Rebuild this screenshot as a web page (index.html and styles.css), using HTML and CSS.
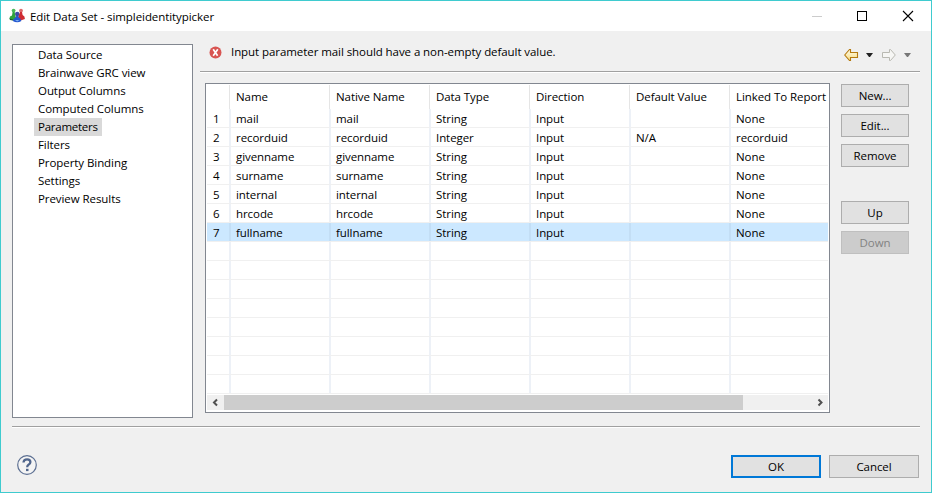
FILE: index.html
```html
<!DOCTYPE html>
<html lang="en">
<head>
<meta charset="utf-8">
<title>Edit Data Set - simpleidentitypicker</title>
<link rel="stylesheet" href="styles.css">
</head>
<body>
<div class="window">
  <header class="titlebar">
    <svg class="app-icon" width="16" height="16" viewBox="0 0 16 16">
      <circle cx="4.6" cy="2.6" r="1.9" fill="#4cb85a"/><path d="M3.600 4h2l1 4.500 1 3-4 .8L.4 10.800 1 8.400l2-1z" fill="#2fa23c"/><path d="M.4 10.500 4 11.500v1L1 12z" fill="#1d5a2a"/>
      <circle cx="12" cy="2.600" r="1.900" fill="#dd6a6c"/><path d="M11 4h2l.6 3 1.800 1.400.5 2.600-3.500 1.200-4-1 1-3z" fill="#cf2c33"/>
      <circle cx="8.200" cy="6" r="2.200" fill="#3d49a5"/><path d="M7.200 8h2l.6 1.600q2 .6 2.600 3.400-4.200 2.600-8.600 0 .6-2.800 2.700-3.400z" fill="#2458cf"/><path d="M6 12h4.400l-2.200 1.500z" fill="#7fb0f2"/>
    </svg>
    <h1 class="caption">Edit Data Set - simpleidentitypicker</h1>
    <svg class="window-controls" width="104" height="12" viewBox="0 0 104 12" fill="none">
      <path d="M0 6.5h10" stroke="#ccc"/><rect x="45.5" y="1.5" width="9" height="9" stroke="#000"/><path d="M91 1l10 10M101 1 91 11" stroke="#000" stroke-width="1.1"/>
    </svg>
  </header>
  <main class="content">
    <nav class="pages">
      <div class="page">Data Source</div>
      <div class="page">Brainwave GRC view</div>
      <div class="page">Output Columns</div>
      <div class="page">Computed Columns</div>
      <div class="page selected">Parameters</div>
      <div class="page">Filters</div>
      <div class="page">Property Binding</div>
      <div class="page">Settings</div>
      <div class="page">Preview Results</div>
    </nav>
    <section class="panel">
      <div class="message">
        <svg width="13" height="13" viewBox="0 0 13 13"><circle cx="6.5" cy="6.5" r="6" fill="#d85552"/><path d="M4.200 3.200 8.600 9.800M8.800 3.200 4.200 9.800" stroke="#fff" stroke-width="1.700"/></svg>
        <p class="message-text">Input parameter mail should have a non-empty default value.</p>
        <svg class="history" width="72" height="14" viewBox="0 0 72 14">
          <defs>
            <linearGradient id="gold" x1="0" y1="0" x2="0" y2="1"><stop offset="0" stop-color="#fffbe6"/><stop offset="1" stop-color="#f8dd85"/></linearGradient>
          </defs>
          <path d="M.7 7 5.500 1.500h1V4.500h7v5h-7v3h-1z" fill="url(#gold)" stroke="#b57a10" stroke-width="1.100"/><path d="M22 5h7l-3 4h-1z" fill="#222"/>
          <path d="M51.300 7 46.500 1.500h-1V4.500h-7v5h7v3h1z" fill="#f6f6f4" stroke="#b9b9b2"/><path d="M60 5h7l-3 4h-1z" fill="#777"/>
        </svg>
      </div>
      <div class="editor">
        <div class="table">
          <div class="row head"><span></span><span>Name</span><span>Native Name</span><span>Data Type</span><span>Direction</span><span>Default Value</span><span>Linked To Report</span></div>
          <div class="row"><span>1</span><span>mail</span><span>mail</span><span>String</span><span>Input</span><span></span><span>None</span></div>
          <div class="row"><span>2</span><span>recorduid</span><span>recorduid</span><span>Integer</span><span>Input</span><span>N/A</span><span>recorduid</span></div>
          <div class="row"><span>3</span><span>givenname</span><span>givenname</span><span>String</span><span>Input</span><span></span><span>None</span></div>
          <div class="row"><span>4</span><span>surname</span><span>surname</span><span>String</span><span>Input</span><span></span><span>None</span></div>
          <div class="row"><span>5</span><span>internal</span><span>internal</span><span>String</span><span>Input</span><span></span><span>None</span></div>
          <div class="row"><span>6</span><span>hrcode</span><span>hrcode</span><span>String</span><span>Input</span><span></span><span>None</span></div>
          <div class="row current"><span>7</span><span>fullname</span><span>fullname</span><span>String</span><span>Input</span><span></span><span>None</span></div>
          <div class="row"><span></span><span></span><span></span><span></span><span></span><span></span><span></span></div>
          <div class="row"><span></span><span></span><span></span><span></span><span></span><span></span><span></span></div>
          <div class="row"><span></span><span></span><span></span><span></span><span></span><span></span><span></span></div>
          <div class="row"><span></span><span></span><span></span><span></span><span></span><span></span><span></span></div>
          <div class="row"><span></span><span></span><span></span><span></span><span></span><span></span><span></span></div>
          <div class="row"><span></span><span></span><span></span><span></span><span></span><span></span><span></span></div>
          <div class="row"><span></span><span></span><span></span><span></span><span></span><span></span><span></span></div>
          <div class="row"><span></span><span></span><span></span><span></span><span></span><span></span><span></span></div>
          <div class="scrollbar">
            <svg width="17" height="15" viewBox="0 0 17 15"><path d="M10 4.500 7 7.500l3 3" fill="none" stroke="#505050" stroke-width="2"/></svg>
            <div class="thumb"></div>
            <svg width="17" height="15" viewBox="0 0 17 15"><path d="M7.500 4.500 10.500 7.500 7.500 10.500" fill="none" stroke="#505050" stroke-width="2"/></svg>
          </div>
        </div>
        <div class="actions">
          <button>New...</button>
          <button>Edit...</button>
          <button>Remove</button>
          <button class="group-start">Up</button>
          <button disabled>Down</button>
        </div>
      </div>
    </section>
  </main>
  <footer class="footer">
    <svg class="help" width="20" height="20" viewBox="0 0 20 20" fill="none"><circle cx="10" cy="10" r="9.3" fill="#f4f4f4" stroke="#5c6f92" stroke-width="1.2"/><path d="M6.500 7.500Q6.700 4.300 10.100 4.300q3.300 0 3.300 2.800 0 1.600-1.900 2.700-1.300.8-1.300 2.400" stroke="#51668d" stroke-width="2.300"/><path d="M9 13.800h2.500v2.300H9z" fill="#51668d"/></svg>
    <button class="default">OK</button>
    <button>Cancel</button>
  </footer>
</div>
</body>
</html>
```
FILE: styles.css
```css
* { box-sizing: border-box; }
body {
  margin: 0;
  font-family: "Open Sans", "Noto Sans", sans-serif;
  font-size: 11.5px;
  letter-spacing: -0.07px;
  color: #000;
}
.window {
  width: 932px;
  height: 493px;
  border: 1px solid #3fcbcf;
  background: #f0f0f0;
  display: flex;
  flex-direction: column;
}
.titlebar {
  height: 30px;
  background: #fff;
  display: flex;
  align-items: center;
  padding: 0 16px 0 8px;
}
.app-icon { margin-top: -1px; }
.caption {
  margin: 0 auto 0 5px;
  font-size: 11.5px;
  font-weight: 400;
}
.window-controls { margin-right: -1px; }
.content {
  display: flex;
  gap: 7px;
  padding: 13px 11px 0;
}
.pages {
  width: 181px;
  height: 374px;
  border: 1px solid #828790;
  background: #fff;
  padding: 1px 0 0 21px;
  display: flex;
  flex-direction: column;
  align-items: flex-start;
}
.page {
  height: 18px;
  line-height: 18px;
  padding: 0 4px;
  white-space: nowrap;
}
.selected {
  background: #d9d9d9;
  letter-spacing: -0.25px;
}
.panel { width: 720px; }
.message {
  height: 29px;
  display: flex;
  align-items: flex-start;
  padding: 2px 0 0 9px;
  border-bottom: 1px solid #fff;
  box-shadow: inset 0 -1px #a0a0a0;
}
.message-text {
  margin: -3px auto 0 9px;
  line-height: 18px;
}
.history { margin: 2px 4px 0 0; }
.editor {
  display: flex;
  gap: 11px;
  padding: 10px 0 0 5px;
}
.table {
  width: 625px;
  height: 330px;
  border: 1px solid #828790;
  background: #fff;
  padding: 1px;
}
.row {
  display: grid;
  grid-template-columns: 24px repeat(5, 100px) 97px;
  height: 19px;
  line-height: 20px;
  border-bottom: 1px solid #f0f0f0;
}
.row span {
  height: 18px;
  padding-left: 5px;
  border-right: 2px solid #edf1f7;
  white-space: nowrap;
}
.row span:first-child { padding-left: 6px; }
.row span:last-child { border-right: 0; }
.head {
  height: 24px;
  line-height: 24px;
  border-bottom: 0;
}
.head span {
  height: 24px;
  border-right: 1px solid #e5e5e5;
  margin-right: 1px;
}
.current { background: #cce8ff; }
.current span { border-right-color: #c3def5; }
.scrollbar {
  display: flex;
  height: 15px;
  margin-top: 1px;
  background: #f0f0f0;
}
.thumb {
  width: 519px;
  margin-right: auto;
  background: #cdcdcd;
}
.actions {
  display: flex;
  flex-direction: column;
  gap: 7px;
  padding-top: 1px;
}
button {
  width: 68px;
  height: 23px;
  padding: 0;
  border: 1px solid #adadad;
  background: #e1e1e1;
  font: inherit;
  letter-spacing: inherit;
  color: #000;
}
button:disabled {
  border-color: #bfbfbf;
  background: #ccc;
  color: #838383;
}
.group-start { margin-top: 27px; }
.footer {
  margin: 8px 11px 0;
  border-top: 1px solid #a0a0a0;
  box-shadow: inset 0 1px #fff;
  display: flex;
  gap: 8px;
  padding: 28px 1px 0 5px;
}
.footer button { width: 90px; }
.footer .default { border: 2px solid #0078d7; }
.help { margin-right: auto; }
```
